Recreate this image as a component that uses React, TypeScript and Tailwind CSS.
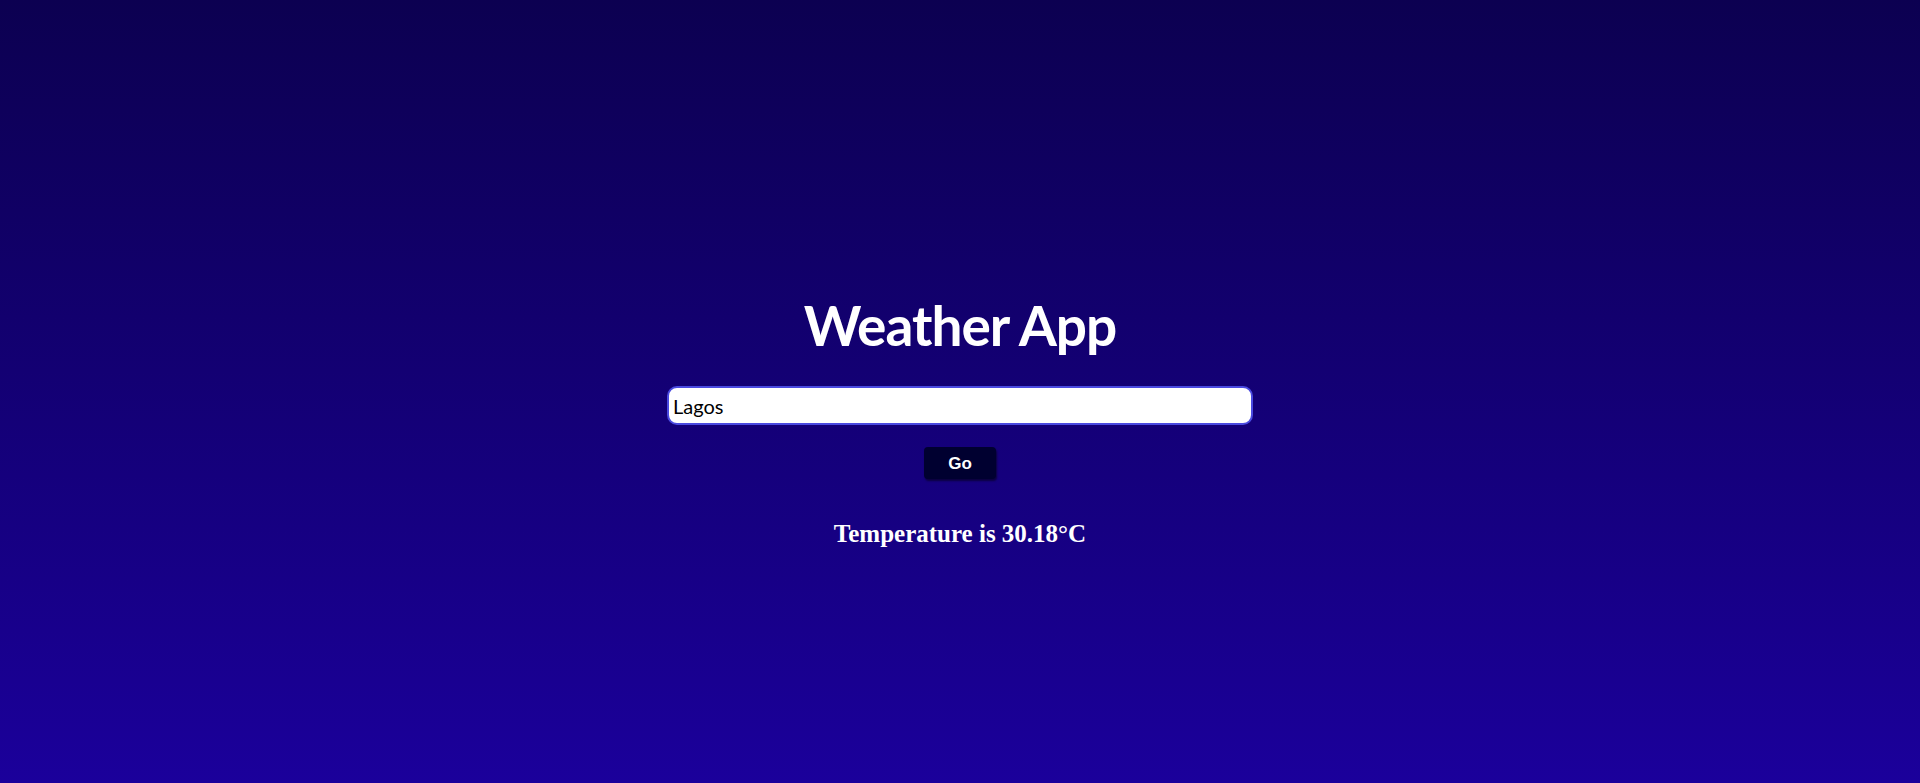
import React from 'react';

export default function App() {
  return (
    <main className="h-[783px] w-full bg-gradient-to-b from-[#0c0051] to-[#1b009b] flex flex-col items-center justify-center pt-[64px]">
      <div className="flex flex-col items-center">
        <h1 className="text-[55px] leading-[62px] font-bold text-white font-['Lato',sans-serif] tracking-[-1px]">
          Weather App
        </h1>
        <input
          defaultValue="Lagos"
          className="mt-[30px] w-[586px] h-[39px] rounded-[10px] border-2 border-[#4a4ae0] bg-white px-[4px] text-[20px] text-black font-['Lato',sans-serif] outline-none"
        />
        <button className="mt-[22px] w-[72px] h-[32px] rounded-[4px] bg-[#000030] text-white font-bold text-[17px] font-['Liberation_Sans',Arial,sans-serif] shadow-[1px_2px_2px_rgba(0,0,0,0.5)]">
          Go
        </button>
        <h2 className="mt-[36px] text-[25px] font-bold text-white font-['Liberation_Serif','Times_New_Roman',serif]">
          Temperature is 30.18°C
        </h2>
      </div>
    </main>
  );
}
